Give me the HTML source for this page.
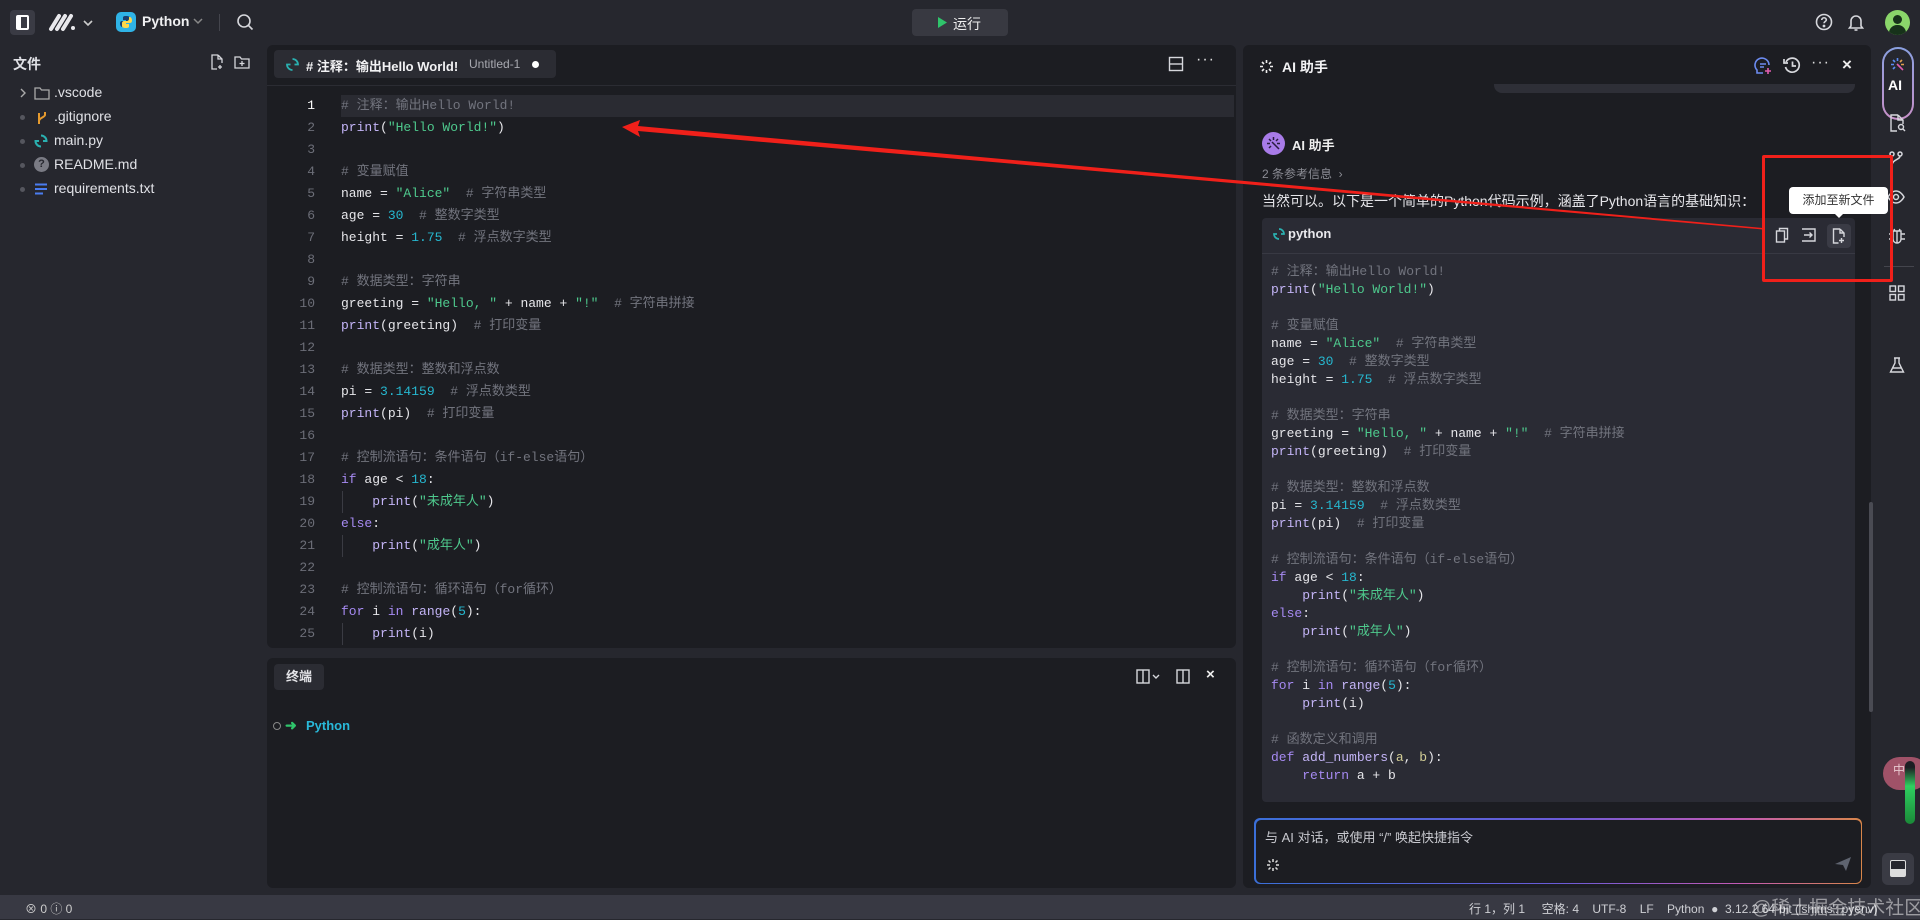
<!DOCTYPE html>
<html><head><meta charset="utf-8">
<style>
*{margin:0;padding:0;box-sizing:border-box}
body{width:1920px;height:919px;overflow:hidden;background:#26272e;font-family:"Liberation Sans","Noto Sans CJK SC",sans-serif;color:#e4e4e8;position:relative}
.a{position:absolute}
.panel{position:absolute;background:#1c1d22;border-radius:6px}
.code{font-family:"Liberation Mono","Noto Sans CJK SC",monospace;font-size:13px;white-space:pre}
.c{color:#72747e}.p{color:#c3b4f6}.s{color:#4ec98d}.n{color:#26b7cf}.k{color:#a68af2}.y{color:#d4cf96}
.ic{position:absolute;stroke:#d6d7dc;fill:none;stroke-width:1.6}
.side div{position:absolute;font-size:14px;color:#e0e1e6}
</style></head><body>

<!-- top bar -->
<div class="a" style="left:10px;top:10px;width:25px;height:25px;background:#3a3b44;border-radius:4px"></div>
<div class="a" style="left:16px;top:15px;width:13px;height:15px;border:2px solid #fff;border-left-width:5px;border-radius:2px"></div>
<svg class="a" style="left:48px;top:12px" width="48" height="20"><path d="M3 17 L11 4 M9 17 L17 4 M15 17 L23 4" stroke="#e8e8ec" stroke-width="4" stroke-linecap="round"/><circle cx="25" cy="16" r="2" fill="#e8e8ec"/><path d="M36 9 l4 4 l4 -4" stroke="#ccc" stroke-width="1.6" fill="none"/></svg>
<div class="a" style="left:116px;top:12px;width:20px;height:20px;background:#2fb3e6;border-radius:5px"></div>
<svg class="a" style="left:119px;top:15px" width="14" height="14"><path d="M7 1c-3 0-3 1-3 2v2h3v1H3C1 6 1 8 1 9s1 3 2 3h1v-2c0-1 1-2 2-2h3c1 0 2-1 2-2V3c0-1-1-2-4-2z" fill="#1a3f6e"/><path d="M7 13c3 0 3-1 3-2V9H7V8h4c2 0 2-2 2-3s-1-3-2-3h-1v2c0 1-1 2-2 2H5c-1 0-2 1-2 2v3c0 1 1 2 4 2z" fill="#ffd84a"/></svg>
<div class="a" style="left:142px;top:13px;font-size:14px;font-weight:bold;color:#f0f0f2">Python</div>
<svg class="a" style="left:193px;top:17px" width="10" height="8"><path d="M1 2l4 4 4-4" stroke="#888" stroke-width="1.5" fill="none"/></svg>
<div class="a" style="left:219px;top:14px;width:1px;height:17px;background:#44454d"></div>
<svg class="ic" style="left:236px;top:13px" width="18" height="18"><circle cx="8" cy="8" r="6"/><path d="M12.5 12.5l4 4"/></svg>
<div class="a" style="left:912px;top:9px;width:96px;height:27px;background:#383941;border-radius:4px"></div>
<svg class="a" style="left:937px;top:17px" width="10" height="11"><path d="M1 0 L10 5.5 L1 11z" fill="#2fc46b"/></svg>
<div class="a" style="left:953px;top:14px;font-size:14px;color:#eee">运行</div>
<svg class="ic" style="left:1815px;top:13px" width="18" height="18"><circle cx="9" cy="9" r="7.5"/><path d="M6.8 7c0-3 4.5-3 4.5 0 0 1.5-2.3 1.6-2.3 3.3" /><circle cx="9" cy="13" r=".6" fill="#d6d7dc"/></svg>
<svg class="ic" style="left:1847px;top:12px" width="18" height="20"><path d="M4 14V9a5 5 0 0 1 10 0v5l1.5 2h-13z"/><path d="M7.5 18h3"/></svg>
<div class="a" style="left:1885px;top:10px;width:25px;height:25px;border-radius:50%;background:#8ad66a;overflow:hidden"><div class="a" style="left:8px;top:5px;width:9px;height:9px;border-radius:50%;background:#17321a"></div><div class="a" style="left:4px;top:15px;width:17px;height:12px;border-radius:8px 8px 0 0;background:#17321a"></div></div>

<!-- sidebar -->
<div class="side">
<div style="left:13px;top:54px;font-weight:bold;font-size:14px">文件</div>
<svg class="ic" style="left:210px;top:54px;stroke-width:1.3" width="14" height="16"><path d="M8 1H2v14h5M8 1l4 4v4M8 1v4h4M10 11v4M8 13h4"/></svg>
<svg class="ic" style="left:234px;top:55px;stroke-width:1.3" width="16" height="14"><path d="M1 2h5l1.5 2H15v9H1z M8 6v5M5.5 8.5h5"/></svg>
<svg class="a" style="left:19px;top:88px" width="8" height="10"><path d="M2 1l4 4-4 4" stroke="#aaa" stroke-width="1.4" fill="none"/></svg>
<svg class="a" style="left:34px;top:86px" width="16" height="14"><path d="M1 2h5l1.5 2H15v9H1z" stroke="#aaa" stroke-width="1.3" fill="none"/></svg>
<div style="left:54px;top:84px">.vscode</div>
<div style="left:20px;top:115px;width:5px;height:5px;border-radius:50%;background:#55565e"></div>
<svg class="a" style="left:36px;top:110px" width="12" height="15"><path d="M3 14V3M9 2v3c0 2-6 3-6 6" stroke="#e59a2e" stroke-width="2" fill="none"/></svg>
<div style="left:54px;top:108px">.gitignore</div>
<div style="left:20px;top:139px;width:5px;height:5px;border-radius:50%;background:#55565e"></div>
<svg class="a" style="left:34px;top:134px" width="14" height="14"><path d="M7 1.5A5.5 5.5 0 0 1 12.5 7H9M7 12.5A5.5 5.5 0 0 1 1.5 7H5" stroke="#2ab0b0" stroke-width="2" fill="none"/></svg>
<div style="left:54px;top:132px">main.py</div>
<div style="left:20px;top:163px;width:5px;height:5px;border-radius:50%;background:#55565e"></div>
<div style="left:34px;top:157px;width:15px;height:15px;border-radius:50%;background:#7a7b84;color:#26272e;font-size:11px;font-weight:bold;text-align:center;line-height:15px">?</div>
<div style="left:54px;top:156px">README.md</div>
<div style="left:20px;top:187px;width:5px;height:5px;border-radius:50%;background:#55565e"></div>
<svg class="a" style="left:35px;top:183px" width="13" height="12"><path d="M0 1.5h12M0 6h12M0 10.5h8" stroke="#4a7cf0" stroke-width="2"/></svg>
<div style="left:54px;top:180px">requirements.txt</div>
</div>

<!-- editor panel -->
<div class="panel" style="left:267px;top:45px;width:969px;height:603px"></div>
<div class="a" style="left:267px;top:85px;width:969px;height:1px;background:#2b2c33"></div>
<div class="a" style="left:274px;top:50px;width:282px;height:28px;background:#2b2c33;border-radius:4px"></div>
<svg class="a" style="left:286px;top:58px" width="13" height="13"><path d="M6.5 1A5.5 5.5 0 0 1 12 6.5H8.5M6.5 12A5.5 5.5 0 0 1 1 6.5H4.5" stroke="#2ab0b0" stroke-width="1.8" fill="none"/></svg>
<div class="a" style="left:306px;top:56px;font-size:13px;font-weight:bold;color:#f2f2f4">#&nbsp;注释：输出Hello World!</div>
<div class="a" style="left:469px;top:57px;font-size:12px;color:#a8a9b0">Untitled-1</div>
<div class="a" style="left:532px;top:61px;width:7px;height:7px;border-radius:50%;background:#fff"></div>
<svg class="ic" style="left:1168px;top:56px;stroke-width:1.4" width="16" height="16"><rect x="1.5" y="1.5" width="13" height="13"/><path d="M1.5 8h13"/></svg>
<div class="a" style="left:1196px;top:51px;font-size:16px;color:#ddd;letter-spacing:1px">···</div>

<div class="a" style="left:341px;top:95px;width:893px;height:22px;background:#2a2b32"></div>
<div class="a" style="left:342px;top:491px;width:1px;height:22px;background:#3a3b43"></div>
<div class="a" style="left:342px;top:535px;width:1px;height:22px;background:#3a3b43"></div>
<div class="a" style="left:342px;top:623px;width:1px;height:22px;background:#3a3b43"></div>
<div class="a code" style="left:275px;top:95px;width:40px;line-height:22px;text-align:right;color:#6c6e78"><span style="color:#fff">1</span>
2
3
4
5
6
7
8
9
10
11
12
13
14
15
16
17
18
19
20
21
22
23
24
25</div>
<div class="a code" style="left:341px;top:95px;line-height:22px;color:#e6e6ea"><span class="c"># 注释：输出Hello World!</span>
<span class="p">print</span>(<span class="s">"Hello World!"</span>)

<span class="c"># 变量赋值</span>
name = <span class="s">"Alice"</span>  <span class="c"># 字符串类型</span>
age = <span class="n">30</span>  <span class="c"># 整数字类型</span>
height = <span class="n">1.75</span>  <span class="c"># 浮点数字类型</span>

<span class="c"># 数据类型：字符串</span>
greeting = <span class="s">"Hello, "</span> + name + <span class="s">"!"</span>  <span class="c"># 字符串拼接</span>
<span class="p">print</span>(greeting)  <span class="c"># 打印变量</span>

<span class="c"># 数据类型：整数和浮点数</span>
pi = <span class="n">3.14159</span>  <span class="c"># 浮点数类型</span>
<span class="p">print</span>(pi)  <span class="c"># 打印变量</span>

<span class="c"># 控制流语句：条件语句（if-else语句）</span>
<span class="k">if</span> age &lt; <span class="n">18</span>:
    <span class="p">print</span>(<span class="s">"未成年人"</span>)
<span class="k">else</span>:
    <span class="p">print</span>(<span class="s">"成年人"</span>)

<span class="c"># 控制流语句：循环语句（for循环）</span>
<span class="k">for</span> i <span class="k">in</span> <span class="p">range</span>(<span class="n">5</span>):
    <span class="p">print</span>(i)</div>

<!-- terminal -->
<div class="panel" style="left:267px;top:658px;width:969px;height:230px"></div>
<div class="a" style="left:274px;top:664px;width:50px;height:26px;background:#2b2c33;border-radius:4px;font-size:13px;font-weight:bold;text-align:center;line-height:26px">终端</div>
<svg class="ic" style="left:1136px;top:669px;stroke-width:1.4" width="26" height="15"><rect x="1" y="1" width="12" height="13"/><path d="M7 1v13M17 6l3 3 3-3"/></svg>
<svg class="ic" style="left:1176px;top:669px;stroke-width:1.4" width="15" height="15"><rect x="1" y="1" width="12" height="13"/><path d="M7 1v13"/></svg>
<div class="a" style="left:1206px;top:666px;font-size:15px;font-weight:bold;color:#eee">×</div>
<div class="a" style="left:273px;top:722px;width:8px;height:8px;border:1.3px solid #888;border-radius:50%"></div>
<div class="a" style="left:285px;top:717px;font-size:14px;color:#2fc46b;font-weight:bold">➜</div>
<div class="a" style="left:306px;top:718px;font-size:13px;color:#29b8d8;font-weight:bold">Python</div>

<!-- AI panel -->
<div class="panel" style="left:1243px;top:45px;width:628px;height:843px"></div>
<svg class="a" style="left:1259px;top:59px" width="15" height="15"><g stroke="#eee" stroke-width="1.6"><path d="M7.5 1v3M7.5 11v3M1 7.5h3M11 7.5h3M3 3l2 2M10 10l2 2M12 3l-2 2M3 12l2-2"/></g></svg>
<div class="a" style="left:1282px;top:57px;font-size:14px;font-weight:bold;color:#f2f2f4">AI 助手</div>
<svg class="a" style="left:1754px;top:57px" width="18" height="18"><path d="M15 8A7 7 0 1 0 3 13v3h6" stroke="#6c8bf0" stroke-width="1.6" fill="none"/><path d="M6 7h6M6 10h4" stroke="#6c8bf0" stroke-width="1.5"/><path d="M14 11v6M11 14h6" stroke="#e05db0" stroke-width="1.6"/></svg>
<svg class="ic" style="left:1783px;top:56px;stroke-width:1.7" width="19" height="19"><path d="M3 6A7 7 0 1 1 2.5 11"/><path d="M1 3v4h4"/><path d="M9.5 5.5v4.5h3.5"/></svg>
<div class="a" style="left:1811px;top:54px;font-size:16px;color:#ddd;letter-spacing:1px">···</div>
<div class="a" style="left:1842px;top:55px;font-size:17px;font-weight:bold;color:#eee">×</div>
<div class="a" style="left:1494px;top:84px;width:361px;height:9px;background:#2e2f37;border-radius:0 0 8px 8px"></div>

<div class="a" style="left:1262px;top:132px;width:23px;height:23px;border-radius:50%;background:#a87be8"></div>
<svg class="a" style="left:1266px;top:136px" width="15" height="15"><g stroke="#2a1c40" stroke-width="1.5"><path d="M7.5 1v3M1 7.5h3M11 7.5h3M3 3l2 2M12 3l-2 2M3 12l2-2M6 6l7 7"/></g></svg>
<div class="a" style="left:1292px;top:135px;font-size:13px;font-weight:bold;color:#eee">AI 助手</div>
<div class="a" style="left:1262px;top:165px;font-size:12px;color:#8b8c94">2 条参考信息 &nbsp;›</div>
<div class="a" style="left:1262px;top:191px;font-size:14px;color:#e6e6ea">当然可以。以下是一个简单的Python代码示例，涵盖了Python语言的基础知识：</div>

<div class="a" style="left:1262px;top:218px;width:593px;height:584px;background:#2a2b34;border-radius:4px"></div>
<div class="a" style="left:1262px;top:253px;width:593px;height:1px;background:#383943"></div>
<svg class="a" style="left:1273px;top:228px" width="12" height="12"><path d="M6 1A5 5 0 0 1 11 6H8M6 11A5 5 0 0 1 1 6H4" stroke="#2ab0b0" stroke-width="1.7" fill="none"/></svg>
<div class="a" style="left:1288px;top:226px;font-size:13px;font-weight:bold;color:#e8e8ec">python</div>
<svg class="ic" style="left:1775px;top:227px;stroke-width:1.4" width="14" height="16"><rect x="1.5" y="4" width="8" height="11"/><path d="M4.5 4V1.5h8V12H9.5"/></svg>
<svg class="ic" style="left:1801px;top:228px;stroke-width:1.4" width="16" height="14"><path d="M1 1h13v12H1M3 7h8M8.5 4.5 11 7 8.5 9.5"/></svg>
<div class="a" style="left:1827px;top:224px;width:24px;height:24px;background:#3a3b45;border-radius:4px"></div>
<svg class="ic" style="left:1832px;top:228px;stroke-width:1.4" width="14" height="16"><path d="M8 1H1.5v14h5M8 1l4 4v4M8 1v4h4M9.5 10v5M7 12.5h5"/></svg>

<div class="a code" style="left:1271px;top:263px;line-height:18px;color:#e6e6ea"><span class="c"># 注释：输出Hello World!</span>
<span class="p">print</span>(<span class="s">"Hello World!"</span>)

<span class="c"># 变量赋值</span>
name = <span class="s">"Alice"</span>  <span class="c"># 字符串类型</span>
age = <span class="n">30</span>  <span class="c"># 整数字类型</span>
height = <span class="n">1.75</span>  <span class="c"># 浮点数字类型</span>

<span class="c"># 数据类型：字符串</span>
greeting = <span class="s">"Hello, "</span> + name + <span class="s">"!"</span>  <span class="c"># 字符串拼接</span>
<span class="p">print</span>(greeting)  <span class="c"># 打印变量</span>

<span class="c"># 数据类型：整数和浮点数</span>
pi = <span class="n">3.14159</span>  <span class="c"># 浮点数类型</span>
<span class="p">print</span>(pi)  <span class="c"># 打印变量</span>

<span class="c"># 控制流语句：条件语句（if-else语句）</span>
<span class="k">if</span> age &lt; <span class="n">18</span>:
    <span class="p">print</span>(<span class="s">"未成年人"</span>)
<span class="k">else</span>:
    <span class="p">print</span>(<span class="s">"成年人"</span>)

<span class="c"># 控制流语句：循环语句（for循环）</span>
<span class="k">for</span> i <span class="k">in</span> <span class="p">range</span>(<span class="n">5</span>):
    <span class="p">print</span>(i)

<span class="c"># 函数定义和调用</span>
<span class="k">def</span> <span class="p">add_numbers</span>(<span class="y">a</span>, <span class="y">b</span>):
    <span class="k">return</span> a + b</div>

<div class="a" style="left:1869px;top:502px;width:4px;height:210px;background:#4a4b53;border-radius:2px"></div>

<!-- input -->
<div class="a" style="left:1254px;top:818px;width:608px;height:66px;border-radius:6px;background:linear-gradient(90deg,#3b6fd8,#6a5bd8 50%,#c35ab5 80%,#d8864a)"></div>
<div class="a" style="left:1255.5px;top:819.5px;width:605px;height:63px;border-radius:5px;background:#1c1d22"></div>
<div class="a" style="left:1265px;top:827px;font-size:13px;color:#c8c9cf">与 AI 对话，或使用 “/” 唤起快捷指令</div>
<svg class="a" style="left:1266px;top:858px" width="14" height="14"><g stroke="#ddd" stroke-width="1.5"><path d="M7 1v3M7 10v3M1 7h3M10 7h3M2.5 2.5l2 2M9.5 9.5l2 2M11.5 2.5l-2 2M2.5 11.5l2-2"/></g></svg>
<svg class="a" style="left:1834px;top:856px" width="18" height="16"><path d="M1 8L17 1 12 15 9 9z" fill="#5f6470"/></svg>

<!-- right bar -->
<div class="a" style="left:1882px;top:47px;width:32px;height:73px;border-radius:16px;background:linear-gradient(#8aa0e0,#c890c8)"></div>
<div class="a" style="left:1884px;top:49px;width:28px;height:69px;border-radius:14px;background:#26272e"></div>
<svg class="a" style="left:1890px;top:57px" width="15" height="15"><g stroke-width="1.6"><path d="M7.5 1v3M1 7.5h3" stroke="#5b8bf0"/><path d="M11 7.5h3M12 3l-2 2" stroke="#e0a050"/><path d="M3 3l2 2M3 12l2-2" stroke="#5b8bf0"/><path d="M7 7l6 6" stroke="#e05db0"/></g></svg>
<div class="a" style="left:1888px;top:77px;font-size:14px;font-weight:bold;color:#fff">AI</div>
<svg class="ic" style="left:1889px;top:114px;stroke-width:1.4" width="18" height="18"><path d="M9 1H2v16h6M9 1l5 5v4M9 1v5h5"/><circle cx="12" cy="13" r="2.5"/><path d="M14 15l2 2"/></svg>
<svg class="ic" style="left:1888px;top:151px;stroke-width:1.5" width="16" height="16"><circle cx="4" cy="3" r="2"/><circle cx="12" cy="3" r="2"/><path d="M12 5c0 4-8 3-8 10M4 5v10"/></svg>
<svg class="ic" style="left:1887px;top:189px;stroke-width:1.5" width="18" height="16"><path d="M1 8s3-6 8-6 8 6 8 6-3 6-8 6-8-6-8-6z"/><circle cx="9" cy="8" r="2.5"/></svg>
<svg class="ic" style="left:1888px;top:226px;stroke-width:1.4" width="18" height="18"><path d="M5 5h8v8a4 4 0 0 1-8 0zM9 5v12M1 8h4M13 8h4M1 13h4M13 13h4M6 3l1 2M12 3l-1 2"/></svg>
<div class="a" style="left:1884px;top:266px;width:30px;height:1px;background:#44454d"></div>
<svg class="ic" style="left:1889px;top:285px;stroke-width:1.4" width="16" height="16"><rect x="1" y="1" width="5.5" height="5.5"/><rect x="9.5" y="1" width="5.5" height="5.5"/><rect x="1" y="9.5" width="5.5" height="5.5"/><rect x="9.5" y="9.5" width="5.5" height="5.5"/></svg>
<svg class="ic" style="left:1889px;top:357px;stroke-width:1.4" width="16" height="17"><path d="M5 1h6M6 1v5L1.5 15h13L10 6V1M4 11h8"/></svg>
<div class="a" style="left:1883px;top:757px;width:45px;height:33px;border-radius:17px;background:#b65a72;opacity:.85"></div>
<div class="a" style="left:1893px;top:761px;font-size:12px;color:#e8c8d0">中</div>
<div class="a" style="left:1905px;top:761px;width:10px;height:63px;border-radius:5px;background:linear-gradient(#1c1d22 10%,#2fd060 40%,#1a8a38)"></div>
<div class="a" style="left:1882px;top:853px;width:32px;height:32px;border-radius:6px;background:#3a3b44"></div>
<div class="a" style="left:1890px;top:860px;width:16px;height:17px;border:1.6px solid #ddd;border-radius:2px;background:linear-gradient(#26272e 55%,#ddd 55%)"></div>

<!-- status bar -->
<div class="a" style="left:0;top:895px;width:1920px;height:24px;background:#383943"></div>
<div class="a" style="left:25px;top:900px;font-size:12px;color:#ccc">⊗ 0 ⓘ 0</div>
<div class="a" style="left:1469px;top:900px;font-size:12px;color:#cfd0d5;white-space:nowrap">行 1，列 1 &nbsp;&nbsp;&nbsp; 空格: 4 &nbsp;&nbsp; UTF-8 &nbsp;&nbsp; LF &nbsp;&nbsp; Python &nbsp;● &nbsp;3.12.2 64-bit ('shims': pyenv)</div>
<div class="a" style="left:1752px;top:893px;font-size:19px;color:rgba(255,255,255,.5);white-space:nowrap">@稀土掘金技术社区</div>

<!-- tooltip & annotations -->
<div class="a" style="left:1789px;top:187px;width:99px;height:27px;background:#fff;border-radius:4px;font-size:12px;color:#333;text-align:center;line-height:27px">添加至新文件</div>
<div class="a" style="left:1834px;top:213px;width:0;height:0;border:5px solid transparent;border-top-color:#fff"></div>
<div class="a" style="left:1762px;top:155px;width:131px;height:127px;border:3px solid #f0201a;border-radius:2px"></div>
<svg class="a" style="left:0;top:0" width="1920" height="919"><polygon points="622,127 640,120 638,126 1763,228 1763,229.5 638,131 640,137" fill="#f0201a"/></svg>
</body></html>
